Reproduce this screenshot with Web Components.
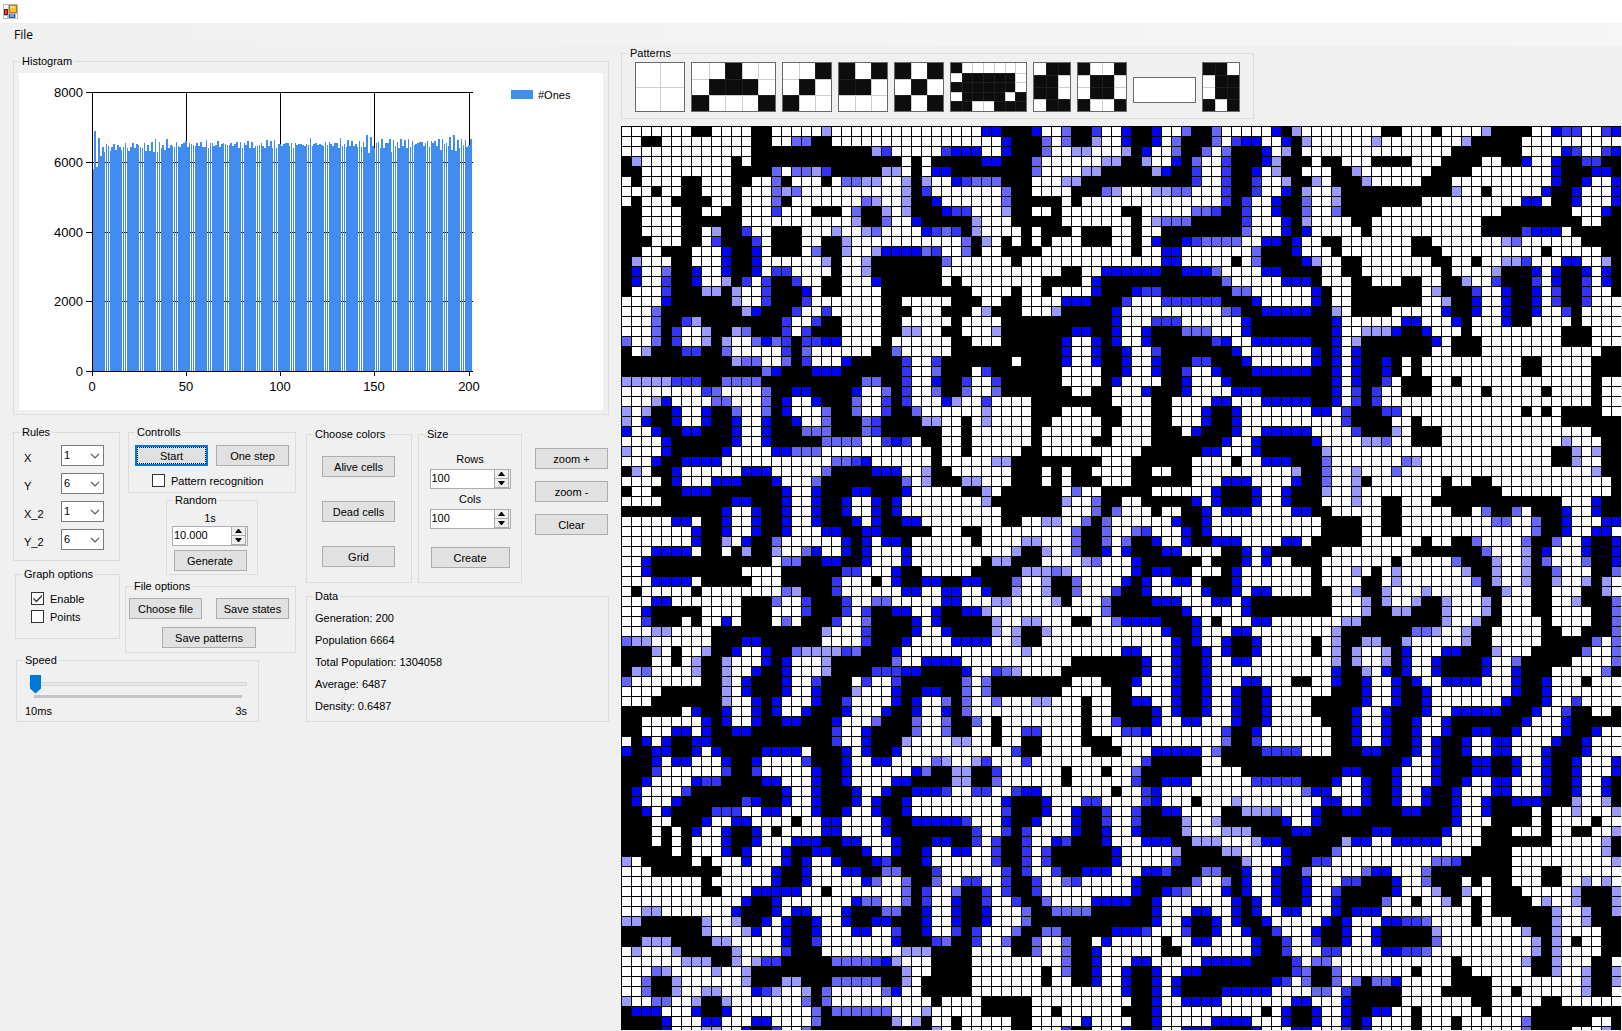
<!DOCTYPE html>
<html lang="en">
<head>
<meta charset="utf-8">
<title>Cellular automaton</title>
<style>
  html, body { margin: 0; height: 100%; background: #f0f0f0; }
  body { font: 11px/14px "Liberation Sans", Arial, sans-serif; color: #000; overflow: hidden; }
</style>
</head>
<body>
<app-window></app-window>

<template id="app-window">
  <style>
    :host { display: flex; flex-direction: column; height: 100vh; overflow: hidden; }
    .title { display: flex; align-items: center; height: 23px; padding-left: 3px; background: #fff; flex: none; }
    .menu { display: flex; align-items: center; height: 23px; padding-left: 14px; flex: none;
            background: linear-gradient(90deg, #f0f0f0, #f6f6f6); }
    .menu button { border: 0; padding: 0; background: none; font: 12px/16px "Open Sans", "Liberation Sans", sans-serif; color: #000; }
    main { display: flex; flex: 1; min-height: 0; gap: 12px; }
    .side { display: flex; flex-direction: column; gap: 10px; width: 596px; padding: 8px 0 0 13px; flex: none; }
    .work { display: flex; flex-direction: column; align-items: flex-start; gap: 7px; flex: 1; min-width: 0; padding-bottom: 1px; }
    life-board { flex: 1; min-height: 0; align-self: stretch; }
    .panels { display: flex; gap: 10px; }
    .left { width: 283px; }
    .right { flex: 1; padding-top: 2px; }
    .pair, .line { display: flex; }
    .pair { gap: 5px; }
    .cola { width: 107px; display: flex; flex-direction: column; gap: 6px; }
    .colb { flex: 1; }
    .stack { display: flex; flex-direction: column; align-items: center; }
    .histogram .in { padding: 5px 5px 4px; }
    .rules { display: flex; flex-direction: column; gap: 7px; padding: 6px 15px 10px 10px; }
    .graph { margin: 0 0 0 2px; }
    .graph .in { display: flex; flex-direction: column; gap: 5px; padding: 11px 0 15px 15px; }
    .controls { margin-left: 3px; }
    .controls .line { gap: 8px; padding: 6px 6px 8px; }
    .controls check-option { margin: 0 0 5px 23px; }
    .random { width: 92px; margin: 0 0 4px 41px; }
    .random .stack { padding: 4px 9px 3px 5px; }
    .random spin-box { width: 76px; margin: 1px 0 4px; }
    .files .line { justify-content: space-between; padding: 5px 6px 8px 3px; }
    .files .wide { width: 94px; margin: 0 auto 4px 36px; }
    .speed { width: 243px; margin-left: 3px; }
    .top { display: flex; margin-bottom: 6px; }
    .colors { width: 106px; margin-right: 6px; }
    .colors .stack { gap: 24px; padding: 15px 1px 15px 0; }
    .size { width: 104px; margin-right: 13px; }
    .size .stack { padding: 11px 0 14px; }
    .size spin-box { width: 81px; margin: 3px 0; }
    .size push-button { width: 79px; margin-top: 15px; }
    .zoom { gap: 12px; padding-top: 21px; }
    .data { padding: 4px 0 4px 8px; line-height: 22px; }
    .data p { margin: 0; }
    .tiles { display: flex; align-items: center; gap: 6px; padding: 2px 13px 6px; }
    .blank { margin-top: 6px; }
  </style>
  <header class="title">
    <svg width="15" height="15" viewBox="0 0 15 15" shape-rendering="crispEdges" aria-hidden="true">
      <path fill="#b9b9b9" d="M0 0h15v15H0z"/>
      <path fill="#fff" d="M1 1h4v4H1zM1 12h3v2H1zM13 10h1v4h-1z"/>
      <path fill="#7a1410" d="M1 5h4v6H1z"/><path fill="#d8462f" d="M2 6h2v4H2z"/>
      <path fill="#b27a10" d="M6 1h8v8H6z"/><path fill="#f5c22b" d="M7 2h6v6H7z"/><path fill="#fbe184" d="M7 2h5v2H7z"/>
      <path fill="#2c5cb8" d="M6 10h6v4H6z"/><path fill="#6d9df0" d="M7 10h4v3H7z"/>
    </svg>
  </header>
  <nav class="menu"><button type="button">File</button></nav>
  <main>
    <div class="side">
      <group-box class="histogram" label="Histogram"><div class="in"><histogram-chart></histogram-chart></div></group-box>
      <div class="panels">
        <div class="left">
          <div class="pair">
            <div class="cola">
              <group-box label="Rules"><div class="rules">
                <rule-select label="X" value="1"></rule-select>
                <rule-select label="Y" value="6"></rule-select>
                <rule-select label="X_2" value="1"></rule-select>
                <rule-select label="Y_2" value="6"></rule-select>
              </div></group-box>
              <group-box class="graph" label="Graph options"><div class="in">
                <check-option checked>Enable</check-option>
                <check-option>Points</check-option>
              </div></group-box>
            </div>
            <div class="colb">
              <group-box class="controls" label="Controlls">
                <div class="line"><push-button active>Start</push-button><push-button>One step</push-button></div>
                <check-option>Pattern recognition</check-option>
              </group-box>
              <group-box class="random" label="Random"><div class="stack">
                <span>1s</span>
                <spin-box value="10.000" label="Random cells"></spin-box>
                <push-button>Generate</push-button>
              </div></group-box>
              <group-box class="files" label="File options">
                <div class="line"><push-button>Choose file</push-button><push-button>Save states</push-button></div>
                <push-button class="wide">Save patterns</push-button>
              </group-box>
            </div>
          </div>
          <group-box class="speed" label="Speed"><speed-slider></speed-slider></group-box>
        </div>
        <div class="right">
          <div class="top">
            <group-box class="colors" label="Choose colors"><div class="stack">
              <push-button>Alive cells</push-button><push-button>Dead cells</push-button><push-button>Grid</push-button>
            </div></group-box>
            <group-box class="size" label="Size"><div class="stack">
              <span>Rows</span><spin-box value="100" label="Rows"></spin-box>
              <span>Cols</span><spin-box value="100" label="Cols"></spin-box>
              <push-button>Create</push-button>
            </div></group-box>
            <div class="stack zoom"><push-button>zoom +</push-button><push-button>zoom -</push-button><push-button>Clear</push-button></div>
          </div>
          <group-box label="Data"><div class="data">
            <p>Generation: 200</p><p>Population 6664</p><p>Total Population: 1304058</p><p>Average: 6487</p><p>Density: 0.6487</p>
          </div></group-box>
        </div>
      </div>
    </div>
    <div class="work">
      <group-box label="Patterns"><div class="tiles">
        <pattern-tile width="50" cells="00/00"></pattern-tile>
        <pattern-tile width="85" cells="00100/01110/10001"></pattern-tile>
        <pattern-tile width="50" cells="001/010/100"></pattern-tile>
        <pattern-tile width="50" cells="101/110/000"></pattern-tile>
        <pattern-tile width="50" cells="101/010/101"></pattern-tile>
        <pattern-tile width="77" cells="1000000/0111110/1111110/0111101/1100111"></pattern-tile>
        <pattern-tile width="38" cells="011/110/110/011"></pattern-tile>
        <pattern-tile width="50" cells="1001/0110/0110/1001"></pattern-tile>
        <pattern-tile class="blank" width="63" height="26" cells="0"></pattern-tile>
        <pattern-tile width="38" cells="110/011/011/101"></pattern-tile>
      </div></group-box>
      <life-board></life-board>
    </div>
  </main>
</template>

<script>
const define = (name, render) => customElements.define(name, class extends HTMLElement {
  connectedCallback() {
    if (!this.shadowRoot) this.attachShadow({ mode: "open" }).innerHTML = render(this);
  }
});

define("group-box", el => `<style>
  :host { display: block; box-sizing: border-box; }
  fieldset { margin: 0; padding: 0; border: 1px solid #dcdcdc; min-width: 0; }
  legend { margin-left: 6px; padding: 0 2px; line-height: 14px; }
</style><fieldset><legend>${el.getAttribute("label")}</legend><slot></slot></fieldset>`);

define("push-button", el => `<style>
  :host { display: block; width: 73px; }
  button { display: block; box-sizing: border-box; width: 100%; height: 21px; padding: 0; border: 1px solid #adadad;
           background: #e1e1e1; font: inherit; color: #000; white-space: nowrap; }
  :host([active]) button { border: 2px solid #0078d7; outline: 1px dotted #000; outline-offset: -3px; }
</style><button type="button"><slot></slot></button>`);

define("check-option", el => `<style>
  :host { display: block; }
  label { display: flex; align-items: center; gap: 6px; height: 13px; }
  .box { display: grid; width: 13px; height: 13px; flex: none; }
  .box > * { grid-area: 1 / 1; }
  input { appearance: none; margin: 0; width: 13px; height: 13px; box-sizing: border-box; border: 1px solid #333; background: #fff; }
  svg { display: none; pointer-events: none; z-index: 1; }
  input:checked + svg { display: block; }
</style><label><span class="box"><input type="checkbox" ${el.hasAttribute("checked") ? "checked" : ""}>
<svg width="13" height="13" fill="none" stroke="#333" stroke-width="1.3"><path d="M2.5 6.500l3 3 5.500-6"/></svg></span><slot></slot></label>`);

define("rule-select", el => `<style>
  :host { display: block; }
  .row { display: flex; justify-content: space-between; }
  label { padding-top: 6px; }
  .field { display: grid; width: 43px; height: 21px; }
  .field > * { grid-area: 1 / 1; }
  select { appearance: none; box-sizing: border-box; width: 43px; height: 21px; margin: 0; padding: 0 0 1px 2px;
           border: 1px solid #7a7a7a; border-radius: 0; background: #fff; font: inherit; color: #000; }
  svg { justify-self: end; align-self: center; margin-right: 4px; z-index: 1; pointer-events: none; }
</style><div class="row"><label for="s">${el.getAttribute("label")}</label><span class="field">
<select id="s"><option>${el.getAttribute("value")}</option></select>
<svg width="10" height="6" fill="none" stroke="#555" stroke-width="1.2"><path d="M1 .8l4 4 4-4"/></svg></span></div>`);

define("spin-box", el => `<style>
  :host { display: flex; box-sizing: border-box; height: 20px; border: 1px solid #adadb3; background: #fff; }
  input { flex: 1; min-width: 0; border: 0; margin: 0; padding: 0 0 2px 1px; background: none; font: inherit; color: #000; }
  .arrows { display: flex; flex-direction: column; width: 15px; padding-right: 1px; background: #f0f0f0; }
  button { flex: 1; display: flex; align-items: center; justify-content: center; min-height: 0; padding: 0;
           border: 1px solid #acacac; border-top-width: 0; background: #efefef; }
</style><input type="text" inputmode="decimal" value="${el.getAttribute("value")}" aria-label="${el.getAttribute("label")}">
<span class="arrows"><button type="button" aria-label="Up"><svg width="7" height="4"><path d="M0 4l3-4h1l3 4z"/></svg></button>
<button type="button" aria-label="Down"><svg width="7" height="4"><path d="M0 0h7L4 4H3z"/></svg></button></span>`);

define("speed-slider", el => `<style>
  :host { display: block; padding: 7px 11px 3px 12px; }
  input { appearance: none; display: block; width: 100%; height: 19px; margin: 0; background: none; }
  input::-webkit-slider-runnable-track { height: 4px; box-sizing: border-box; border: 1px solid #d6d6d6; background: #e7eaea; }
  input::-webkit-slider-thumb { appearance: none; width: 11px; height: 19px; margin-top: -8px; background: #0078d7;
           clip-path: polygon(0 0, 100% 0, 100% 74%, 50% 100%, 0 74%); }
  .ticks { height: 3px; margin: 2px 5px 6px; background: #c4c4c4; }
  .ends { display: flex; justify-content: space-between; margin: 0 0 0 -4px; }
</style><input type="range" min="10" max="3000" value="10" aria-label="Speed"><div class="ticks"></div>
<div class="ends"><span>10ms</span><span>3s</span></div>`);

/* Population per generation, in tens. */
const POPULATION = [580,689,586,669,617,643,629,652,646,632,643,652,635,649,643,635,643,655,640,632,643,655,640,652,649,643,640,655,632,649,632,658,629,666,629,658,638,649,635,666,640,649,646,643,658,646,643,652,655,660,
643,655,652,649,646,655,646,658,643,643,663,640,655,655,646,649,660,643,652,655,652,649,649,655,646,652,658,640,658,640,655,649,660,638,658,638,646,646,649,655,646,638,663,646,660,640,663,640,652,652,
646,652,655,655,646,655,640,655,649,652,652,649,646,652,649,669,646,652,655,649,652,649,646,658,649,658,652,646,655,655,638,669,646,652,643,663,646,660,646,652,643,660,643,658,643,678,626,672,646,640,
655,658,640,666,638,655,655,666,629,663,646,658,640,666,646,663,640,666,643,660,649,652,655,658,658,646,655,660,643,660,655,660,646,666,635,666,652,655,646,672,635,678,632,663,640,666,649,663,643,649,666];

define("histogram-chart", el => {
  const left = 73.57, base = 298, pitch = 1.888, width = 1.555;
  const ys = [298, 228, 159, 89, 19], xs = [73, 167, 261, 355, 450];
  let bars = "", axes = "", text = "";
  POPULATION.forEach((p, i) => {
    const s = left + i * pitch, a = Math.round(s), b = Math.round(s + width), h = Math.round(p * 279 / 800);
    bars += `M${a} ${base}v${-h}h${b - a}v${h}z`;
  });
  ys.forEach((y, i) => {
    axes += `M67 ${y}h387v1H67z`;
    text += `<text x="64" y="${y + 5}" text-anchor="end">${i * 2000}</text>`;
  });
  xs.forEach((x, i) => {
    axes += `M${x} 19h1v284h-1z`;
    text += `<text x="${x}" y="318" text-anchor="middle">${i * 50}</text>`;
  });
  return `<style>
    :host { display: block; background: #fff; }
    svg { display: block; width: 100%; height: 337px; font: 13px "Liberation Sans", sans-serif; }
    .key { font-size: 11px; }
  </style><svg role="img" aria-label="Histogram"><path shape-rendering="crispEdges" d="${axes}"/>
  <path shape-rendering="crispEdges" fill="#418cf0" d="${bars}M492 17h22v9h-22z"/>
  <path shape-rendering="crispEdges" d="M67 298h387v1H67z"/>
  ${text}<text class="key" x="519" y="26">#Ones</text></svg>`;
});

define("pattern-tile", el => {
  const rows = el.getAttribute("cells").split("/"), w = +el.getAttribute("width"), h = +(el.getAttribute("height") || 50);
  const n = rows[0].length, m = rows.length, cx = i => Math.round(1 + i * (w - 2) / n), cy = j => Math.round(1 + j * (h - 2) / m);
  let on = "", lines = "";
  rows.forEach((row, j) => [...row].forEach((c, i) => {
    if (c === "1") on += `M${cx(i)} ${cy(j)}H${cx(i + 1)}V${cy(j + 1)}H${cx(i)}z`;
  }));
  for (let i = 1; i < n; i++) lines += `M${cx(i)} 1h1v${h - 2}h-1z`;
  for (let j = 1; j < m; j++) lines += `M1 ${cy(j)}h${w - 2}v1H1z`;
  return `<style>:host, svg { display: block; }</style>
  <svg width="${w}" height="${h}" shape-rendering="crispEdges" role="img" aria-label="Pattern">
  <rect width="${w}" height="${h}" fill="#696969"/><rect x="1" y="1" width="${w - 2}" height="${h - 2}" fill="#fff"/>
  <path fill="#dcdcdc" d="${lines}"/><path fill="#0d0d0d" d="${on}"/><path fill="#808080" fill-opacity=".15" d="${lines}"/></svg>`;
});

/* Board state in blocks. Each run is a colour letter and the column at which it starts:
   w dead, k alive, a to d the trail from faint to full. */
const BLOCKS = [
{ x: 0, y: 0, end: 33, rows: `w0k7w9k13w15a20w21
w0k2w4k13w15b17k19w21
w0k13a25c26w27c32d33
k0a1w2k11w12k13w28k29w30k31
k0w2k11b15w16b17a19c20k21a26w28k29w30d31k33
w0k1w2k6w8k11w13b15k16w17k20w21b22a24w26a28k29a30w31d33
w0k3w4k6w8k11w12b15a16b17w18a28k29c30w31
w0k1w2k5w9k11w12b15k16w17b24a25w26a28k29d31w32
k0w2k6w8k10w12c15w16k19w22b23k24a26w27a28k29d32c33
k0w2k6w12a23k24b26w27d29k30
k0w2k6w8a9k10c12w13k15w18a21w22a24b25w26d30c31b32c33
k0w3k6w8c9k10c13w14k15w18k20a22w23
k0w2k4w7d10k11d13w14k15w18b19k20a22w23a25d26b30c31w32
k0a1w2k5w7d10k11d13w14a20k21w22a24k25b32w33
k0d1w2b4k5d7w8d10k11d13w14c15w17k21w22a24k25w32
k0d1w2c4k5d7w8a10k11c12w13c14k15c17w18k20w22d25k26w32k33
k0w1c4k5a8k10a11w12c14k15d18w19k20w22k26
w0d4k5a11w12c14k15c18w19k26w28k33
w0b3k4a12d13k14c17w18c20w21k26w29k32
w0b3k4c6a7k8c16w17c19k20w22k26w28k33
w0b3k4c5w6a8k9a11b12k13c16w17c18k19w22k26a28w30k32
b0w1b3k4c5w6a8k9a10w11b13d14b15c16k17c18d20w22k26w27k33
k0w1a2k3c6k8b10w11c16k17b18w19k25b27w28k33
k0a11b12w14b16k17c18w19d22k23c28w29c31k32
k0b14d15k16d19k22c28w29b31k32
a0c5k8b10k14b24k26c28w29d31k32
w0c8b9w10b14k15d17k19d23w24b26k27c28w29b31k32
w0a3d4w5b9w11b14k15d16w17d19k20b23w24c26k27c28w29d32a33
a0w1a2k3d5w6d8k9b11w12b14k15d16w17b20k21b23w24c26k27b29w30
a0w1d2k3d5w6d8k9d11w12d14k15d17w18b20k21b24c25k26a30w32` },
{ x: 33, y: 0, end: 33, rows: `w0d3k5d8w9b11k12c14w15d17k18d20w21b23k24b26w27d32k33
w0d5k6b9w10b11k12a14w15d17k18d20w21b22k23b26w27c28d29w31d33
d0w3d5k6b9w10a12w14a17k18d19w20b22k23b25w26b27k28d31w32a33
k0d3k5b8w9a15k17a19w20d22k23b24w25c27k28d31a32k33
k0b8w9a13k15a20d21k22c24w25c27k28d30w31a32k33
d0c1b2k5w8a11k13c24w25c27k28c30w31a33
w0b5k6w8k12b15a16w17a20b22w24c27k28c30w31d33
w0b5k6w11k12w13c27k28c29w30d32k33
c0w2a5k6w8k10w11k17w19b24c26k27c29w30d32k33
k0a2w3k6w11k18w19a20b21k24c29w30d33
c0k1a2w3k7w8k9w12k13w16k18w19k21b29w30d33
w0b1k2a3w4k5w6k7w8k9w10k13w16k18w19d20k21d23c24b25w29d31k33
w0b1k2w3k5w9k18w19d21w23b30k31
w0k6w7d21w23k28w29b30k31
w0k11w13d15k21d23b26w27d31k33
k0w1k9w13d14k15b27w28d33
k0w2k6w7k9w10d14k15d18c19k21b28w30
k0w3k5w7d11k14c17w18c21k27d30w31
k0w2a3k4w7a10k11d16w17b27c28k29d31
k0w1k5d16w17c20w23d29k30
k0w1a4k5d12k14d16w17d19k20b23w26d29k30
k0w2k5d11w12d14k15d16w17d19k20c26d27w28d30
k0d11w12d14k15d17w18c20k21d28w29
k0w6k7d11w12d14k15d17w18d20k21c24k26d29w30
k0w2c3k4w11k15d17w18d20k21c23w24d26k27d30
k0c1w2c4k5w11k15d16w17k21d23w24d27k28
k0b1w2b4k5w12k14w16d19k20d23w24d28k31
a0w1c3w4k8w16k20w22d26w28d31
w0a3w4k8w11k14w17k20w22d25k26d28w29
w0k1w2a3w4k8w10k15w17k20w22d25k26d28w29` },
{ x: 66, y: 0, end: 33, rows: `k0a1w2k10w12k15w16a20k21w25d27c28w30c32d33
d0k1a2w3a9w10a18k19w24
a0k1w2k17w24d28c29w30c32d33
k0w3k4w6k9w13k16w20k22d24w25d27k28c30k32
k0w2k5a7w8k15w19d27k28d31k33
a0k1a3w4k5a8w9k14w17d27k28d30w31d33
d0k1a2w3a5k6a17w18k20w21d26k27d29w30d33
k0b2w3a5k6w14d24w26k27d29w30d33
k0b2w3b5k6w10k22w29d32k33
d0k1a2w3k7w9k20w30k32
d0k1d2w3k8w9k20c24d25w28k29
k0d1w2k4w6k13w15a22b23w24k30
k0d1w2k5w6k13w16k26w27k32
k0d2a3w4k6w8k15w17k19w20a22c24w25d28w30a32k33
k0w4k6w8k16w17a21k22d25w26d27k28d30w31d32k33
d0k3w4k7w9k12w14k16a18w19c21k22c25w26d27k28c30w31d32k33
w0d3k4w5k7w14a15k16c19w20d22k23d25w26c27k28c30w31k33
w0d3k4w5k7w14a16k17d19w20d22k23d25w26c27k28c30w31
d0k3a5w6k7w11d16k17d19w20d22k23d25w26c28k29w30
k0d5w6d12w14d17k18w19d22k23w25k29w30
k0d5w6a8d11k12d14w15k18w19k28w31
d0k3d5w6a7k8d15w16k17w20k28w31
w0d3k4d5w6d7k8w15k17w20k32
w0d3k4d5w6d7k8d10k11w12k13w14k24w26k31
d0k3d5w6d7k8d10k11w12k13w14k24w26k31
k0d5w6d7k8c10w11k12w15k17w18k31w32
k0d5w6c7k8c9w10k12w15k20w21k26w27k31w32
d0k3d5w6c7k8c9w10k31w32
w0d3w5c6k7c10w12k24w25k26w27k28w32
w0c6k7w11k13w14k28` },
{ x: 0, y: 30, end: 49, rows: `d0w1d3k4d6k8d11w12d14k15b18k21b24c25k26w32k34w35k41w42k48w49
w0d4k5d11w12d14k15b20w24c26d27c28w29k30w32k34w35k41w42k47w49
a0w1d4k5d10w11d15b17w20k31w32k34w35k40w42
w0d3k4d6w10b21c23d24w25k31w32a37k39w48
k0a1w2k3d5w6d12w15b20k21d25w28a30k31w33k39w42k43w44k45w47
w0k4d5w6d9k12d15w16b19k20b28w29a30k31a34w36k39w42k43w44k45w48
k0w1k3d6k9d16w17d19k20d23k25d28w29k34a36w37k38w44b45w46k48
w0k4d11k13d16w17d19k20d22w23d25k26d27w28a36k37a44w45b47k48w50
k0d10w11d13k14d16w17d19k20d22w23d25k26d27w28k38w44b47k48b49w50
w0d5w7k8d10w11d13k14d16w17d19k20d23w24d25k26d28w30k38w40a42w44b46k47b48w49
w0d7k8d10w11d13k14d16w17d20k22d24k26w31k34w36b45k46b48w49
w0d7k8a10w11d12k13b15w16d22k23d24w25d26k28w29k35w36a40w42b45k46b48w49
w0d3w7k8w10k11a12k13a15w16b18d19w20d22k23d24w25d28w29a39k40a42w43b45k46d48w49
w0d2k3w15b16k18d20k22d24w25d28w29k36a37k39w42a46b47w48
w0d2k3w12k16c22w24d27k28w30k35a40b43a44w45
w0d3w7k8w13k16c21w22k25w26d27k28d30k32d34k36b39w40a42k43b45w46
w0k1w2k7w8b16a17k18c21w22d28w30d32w34d36k37a39w40a42k43b45w46c49
w0d3w5k12b15w16c18k19c22w23b25w27d32w34a37w39a43k44w45b48k49
w0d2k3w8k12w15c18k19c22w23c24k25d27w29d31k32d34a36w37b48k49
w0c2k3w6k7w8d10w11k12w15b16w17k18c21w22b24k25d29w30d31k32a37w38a40w42k45w47b49
w0a3w5k9a20w21c24k25d29w30d32k33a37w38a39k40a42w43
b0a1w3k9d12k14w20c24k25d28w29d33w37a39k40w42
k0a3w4k5w6a8k9d11w12d14k15b17a18c22b23k24d27w28a40w41
k0w3k5w6a7k8a10w11d14k15d16w17a20k21b27w28d30w34k45
k0a1b2w3a7k8a10w11d13k14d16w17a20k21c25d28k30d34w35c37b38a39w40k44
b0w1k8a10w11d12k13d16w17c19k20w23c24w25c27k28b34w35b36k37w45k48
w0k4a10w11d12k13d16w17d19k20a23w24d27k28d30k32b34w35b36k37w44k49
w0k3a10w11d13k14d15w16d19k20c22w23d27k28d29w30b32k33b34w35b37w38a41w43k46w47k49
k0w6d7k8d10w11d13k14d15w16d18k19d22w23d26k27d29w30d32k33b34w35k46w47k49
k0w2d8k9d10w11d13k14d16k18d21w22b25k26b29w30b32k33b35w36k37w38k46w47c49` },
{ x: 50, y: 30, end: 49, rows: `w0k3w6d7k8d11w12d14w19c23k24a27w28k29w32k47
w0k3d10w11d13k14d19w20a24b26w27k29w32a44w45k48
w0k2d8w10d13k14a20w21k43a45w46a47k48
w0k1w7k11w12d14k17b20w21b28a29w30k43a45w46k48
w0k1w3k5w7a17k18b20w21a23w24b27w28a47k48
w0k1w7d10w13d17k18b20w21a23k24w25k32w33k35w37k49
k0w3d9k10d13w14d16k17a20w21a23w24k32w38k49
w0k2d7w8d9k10d13w14d16k17w20a23w24k26w28k31w44d47k48
w0k3w4k6d8w9d10w13d17k19w21k26w28k33w35b36k37b39w40k41d44w45d47k48
w0d5k6d8w9k20w24k26w28b37w39b41k42d44w45d48
w0b1c2w3d6k7d8w9k20w24k26w28b41k42d44w45d47w49
b0k1d3w4d6k7d9w12d16w18k19w24k30w31k33b35w36b40k41b43w44d46k47d49
d0k1d4w6k10d12w13d14k15w21k29b36w37a40k41d42w43d46k47d49
w0d1k2w8k9d12w13d14w15k17w20k27w28b33k34a37w38a40k41b42w43b46k47d49
w0d1k2d3k5w7k10d11w12k19w20a23w24k25w26a27w28a34k35a37w38a40k41b43w44k47b49
d0k1d2w3d5w7k8d11w12k19w20k24w26a27w28b35k36a37w38a40k41a43w44a46k47a48w49
k0d2w3d8k9d11w12d13w15k19w21a23k24a26w27a30w31k36a38w39k41w43k46a48w49
k0d3w6d9w11d12k13w21a24k25a26w27a29k30a32w33a36k37w38k41w43a45k46b49
k0d6w7d12k13w21a24k25a27k29a32w33a36k37w38k41w43k47b49
d0k4d7w8k9w10d13w15a22k24a32w33a35k36w38k42w43k47b49
w0d4k5d7w8d11w13a21k22b29a31w32a34k35w37k42w44k46b49
w0d5k6d7w8d10k11d13w14k19w20a21k22a24k26a28w29a34k35w37k42b47w48b49
d0w2d5k6d8w9d10k11d13w14k19w20a21k22a23w24a26k27d28w29d32k34a37w38k41b46w47b49
k0d2w3d5k6d8w9d11w13a21k22a23w24a26k27d28w29d31k32d36w37b39k40w45b49
k0d2w3d5k6d8w9d21k22a24w25d26k27d28w29d31k32d36w37d39k40w43b48k49
k0d1w2d5k6d8w9d12w14k17w19d21k22d24w25d27k28d29w30d32w36d39k40d42w43k46w47
k0w1d5k6d8w9d11k12d14w15k21d24w25d27k28d30w31d39k40d42w43
k0d1w3d5k6d8w9d11k12d14w15k19d24w25d27k28d30w31d38k39d42w43c45w46
k0d3w4d5k6d8w9d11k12d14w15k19d23w24d26k27d30w31d33k38d41w42c44k45w47k49
k0d3w4d6w8d11k12d14w15k20d23w24d26k27d29w30d32k33d40w41d44k45` },
{ x: 0, y: 60, end: 49, rows: `k0w2d5w7d8k9d11k13c21w22d24k25b29w30b32k33w35k37w38c40w42k46w47
w0k1d2w3d4k5d7k9c21w22d24k25a28w29a33w35k37w38k40w42k46w49
d0k1d3k5d7w8d9k10d14w18k19d22w23d24k25d27w28c39k40w42k47w50
k0d3w4d5w7d10k11d13w14c18k19d22w23d25w27b31a32w33a35c36w37c40w41
k0c3w4c10k11c13w14d19k20d22w23d29b30k31a33k35c37w38k44w45k48w49
k0d2w3d7c8k10d14w16d19k20d22w23d27k29a33k35b37w38k44w45
k0d1w2c6k7d16w17d19k20d23w24d26k27d29c32w33c35w37c39d40w42k49w50
k0d1w2d5k6c12d13k14d16w17d19k20d23w24d25k26d28w29d38k39d42w43c46w48
k0d2w3d4k5c9w12d14w16d19k20d22w23d25k26d28w29c38k39d42w43d45k46c48w49
k0w3k5d8w9d11w13k17w18d20w22d26k27d29c34w35d38k39d41w42d45k46c48w49
k0w3k4w5k6d7w8d10k11d13w14k15w16d20w22d26k27c35w36c38k39c40w41d45k46d48w49
k0w3k4w5k6w7d10k11d13w14d17k20d22w24d27k28d31k33c35w36c37k38c40w41d43c44k45d48w49
k0w5k6w7d10k11d12w13d16k17d19k21d24w25d27k28d30w31d33w35c37k38c40w41c42k43d49w50
a0w1k2w7k8w9d12w13d16k17d18w19d21k22d25c26k27d30w31c37k38c40w41c42k43d49w50
w0k3w10d15k16d18w19d22k24b26k28c31w32c38k39c40w41c43k44d46w49
w0k8w9d15k16d18w19d24b25w26b28k29b31w32c34w36c38k39c41w42b44c45w46
w0k8w10d13w18k20w21b28k29c30w31b33k34c36w37c38k39c41w42
w0d12k13d15w16d23b24w26b28k29c30w31d33k34c36w37c39k40b42w43d47
w0a2w4d11k12d15w16d17w19d22k23b26k28d30w31d33k34d36w37b40k41b43k47
a0k2a8w9a11k12d14w15d16k17d19w20d22k23d25k27d30w31d33k34d36w37b40k41
k0a8w9a12d13w14d16k17d19w20d23w25c27k28d30w31c33k34c35w36b39k40b42k44d49
k0a2k5a9w11d16k17c19w20d27k28c31b32k33c35w36b38k39b41w42b44k45w47d48w49
w0a1w2a5k6a11w12c16k17w20a28k31w35k39b41w42b44k45d47w48
w0a6k9a11w12a13c14k16b21c25d26a27w28k31w35b44k45d47w48
w0b3a4w5a9w10a12k13a28w29k31w35k42w43b44k45d47w48
w0b2k3a5w6a12k13a16k18b21k26a28w29k30w35k42w43k45d47w48
w0b2k3a5w6a8w10d13c14a15w16a18k19b20w21b26d27w28k30w35
a0w1b3w5a7k8a10w11b18k19b20w21k31w32k36w41
k0d1w4d7k8d10w11b19k20b21w27a30w31k36w41k43w44
k0d4w5d8w10d13w15b19k20a27w28a29k30w31k33w34k39w41d46w47
k0d4w5a8w10d12k13c15w16b18k19a31w32k33w34k39w41c44k45w47` },
{ x: 50, y: 60, end: 49, rows: `c0d2w3c10k11d13w14k21d23w24d26k27d29w30d32k33d35k37d39w40d44k45d47w48
w0b10k11c13w14k21d23w24d26k27d29w30d31k32d34w35d37w39d43k44d46w47
w0d3w8b9k10c14w18k21d24k26d29w30d31k32d34w35d37w39d42k43d46w47
w0c2k3w8k10d28w29d31k32d35k37d39w40d42k43d45w46d49
w0b1k2w8k12d22k24d27w28d31k32d35k37d39w40d42k43d45w46d49
w0c1k2d4w7c13k18d21w22d24k25d27w28d31k32d34w35d37w39d42k43d45w46d48k49
w0c2d3w4b18d19w21d24k25d27w28d30k31d33w34d37w39d42k43d45w46d48k49
w0c2d3w4k7w8a11w12d20w22d24k25d27w28d30k31d33w34d36k37d39k42a45w46a48k49
w0c1k2d4w6k10a12b15w16d19k20d22k24d28k30d33w34d36k37w41k42w43a45w46a49
w0c1k2a6w7a9k10d16w17d19k20d33w34k37w41k42w43k47w48
w0d1k2a6w7a10k13d17k19d25k27d32w33k36w39k42w43k45w47a49
w0d2k5a7w10a13d14k16a22d23w25d27w32k36w43a48k49
w0a5k6a10w12d16k17b21w22k35w39a48k49
w0c5k6a12w13d16k17c19w21b31c33k34w39a49
w0d2c4k5b8k10d12w13d15k16b18w19b24d25w27b30k31w39k42w44
w0d1k2b7w8b10k11d12w13d15k16d18w19c22k24d27w28b30k31w34k35w36k37w39k42w44a46w47a48w49
w0d1k2d4c5b6w7d10k11d12w13d15k16d18w19c21k22d27w28a31k32a34w35k37w40a45k46a49
d0k1d3w4d11k12d13w14d15k16d18w19d21k22b26w27k29w30a32k33w34k35w36k37w41a42w43a45k46a49
k0d3w4d7w9d11k12d13w14d16w18d21k22d23w26k35w36k37a43w44a46k47a49
k0d3w4d6k7d9w10d11k12d14w15d20k21d22w23d26c28b30w31k35w36k39a43w44a46k47
d0c2w3c6k7d9w10d12k13c15w16d19k20d22w23d25k26a31w32a40k41a43w44k48
w0k4w5d7w9d13k14c16w17c19k20d22w23d25k26b31w32a41k42a43w44k45w46k48
w0k4w6d13k14c16w17c20w22d26c28b30w31a41k42a43w44k48
w0d1w3d8k13c17w18b19w21k33w34a40k41a43w44k47w49
d0k1d3w4d6k8c17b18k19b21w22k29w30k33w35k41a43w44a46k47a49
d0k1d3w4d5k6d15c16w17b18k19b21w22b23k24b25d27w28k33w37a46k47a49
d0k1d3w4d5k6d10w15b19w21c22k23w28k32w37k39w40a46k47w49
w0k1d3w4d6w10d17w19d22k23w28k35w37k42w44
k0d3w4k14w15d16k17d19w20d22k23d25w27k29w30k36w37k41
w0k1d3w4d9w13d16k17d19w20d22k23d24w25k29w30k33w34b40k41w47k49
d0k1d3w4d6k9d13w14d17w19c22k23d24w25k29w30k33w34b40k41w45a48k49` }];

define("life-board", el => {
  const fill = { w: "#fff", a: "#9999ff", b: "#6666ff", c: "#3333ff", d: "#0000ff" };
  const paths = { w: "", a: "", b: "", c: "", d: "" };
  for (const block of BLOCKS) block.rows.split("\n").forEach((line, j) => {
    const runs = [...line.matchAll(/([a-z])(\d+)/g)].map(m => [m[1], +m[2]]).filter(r => r[1] <= block.end);
    runs.forEach(([c, from], i) => {
      if (c === "k") return;
      const to = i + 1 < runs.length ? runs[i + 1][1] : Math.min(block.end + 1, 100 - block.x);
      for (let n = from; n < to; n++) paths[c] += `M${(block.x + n) * 10 + 1} ${(block.y + j) * 10 + 1}h9v9h-9z`;
    });
  });
  return `<style>
    :host { display: block; overflow: hidden; }
    svg { display: block; }
  </style><svg width="1000" height="911" shape-rendering="crispEdges" role="img" aria-label="Board"><rect width="1000" height="911"/>
  ${Object.keys(paths).map(c => `<path fill="${fill[c]}" d="${paths[c]}"/>`).join("")}</svg>`;
});

customElements.define("app-window", class extends HTMLElement {
  connectedCallback() {
    if (this.shadowRoot) return;
    this.attachShadow({ mode: "open" }).append(document.getElementById("app-window").content.cloneNode(true));
  }
});
</script>
</body>
</html>
